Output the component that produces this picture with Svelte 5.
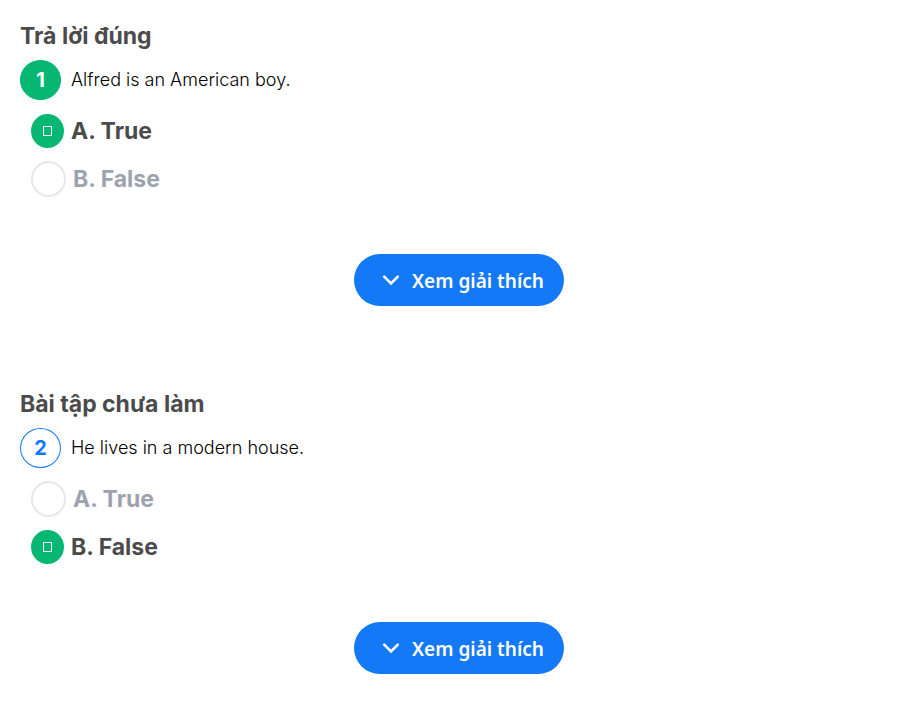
<script>
  let questions = $state([
    { number: 1, heading: 'Trả lời đúng', done: true, text: 'Alfred is an American boy.', answer: 'A' },
    { number: 2, heading: 'Bài tập chưa làm', done: false, text: 'He lives in a modern house.', answer: 'B' }
  ]);
  const options = [
    { key: 'A', label: 'A. True' },
    { key: 'B', label: 'B. False' }
  ];
</script>

<main>
  {#each questions as question (question.number)}
    <section>
      <h2>{question.heading}</h2>
      <div class="question">
        <span class="number" class:done={question.done}>{question.number}</span>
        <p id="question-{question.number}">{question.text}</p>
      </div>
      <div class="options" role="radiogroup" aria-labelledby="question-{question.number}">
        {#each options as option (option.key)}
          <label>
            <input type="radio" name="answer-{question.number}" value={option.key} bind:group={question.answer} />
            <span>{option.label}</span>
          </label>
        {/each}
      </div>
      <button type="button">
        <svg width="18" height="18" viewBox="0 0 18 18" fill="none" aria-hidden="true">
          <path d="M2.2 4.6 9 11.4 15.8 4.6" stroke="currentColor" stroke-width="2.6" stroke-linecap="round" />
        </svg>
        <span>Xem giải thích</span>
      </button>
    </section>
  {/each}
</main>

<style>
  :global(body) {
    margin: 0;
    background: #fff;
  }
  main {
    padding: 20px 9px 0 20px;
    font-family: Inter, 'Liberation Sans', sans-serif;
  }
  section {
    display: flex;
    flex-direction: column;
    padding-bottom: 82px;
  }
  section:last-child {
    padding-bottom: 40px;
  }
  h2 {
    margin: 0 0 8px;
    font-size: 23px;
    font-weight: 700;
    line-height: 32px;
    color: #4b4b4b;
  }
  .question {
    display: flex;
    align-items: center;
    gap: 10px;
  }
  .number {
    box-sizing: border-box;
    flex: none;
    width: 41px;
    height: 40px;
    border: 1px solid #1379f6;
    border-radius: 50%;
    font-size: 20px;
    font-weight: 700;
    line-height: 38px;
    text-align: center;
    color: #1379f6;
  }
  .number.done {
    border-color: #05b771;
    background: #05b771;
    color: #fff;
  }
  p {
    margin: 0;
    font-size: 18px;
    font-weight: 300;
    line-height: 24px;
    color: #000;
  }
  .options {
    display: flex;
    flex-direction: column;
    margin: 7px 0 51px 11px;
  }
  label {
    display: flex;
    align-items: center;
    gap: 7px;
    height: 48px;
    font-size: 23px;
    font-weight: 650;
    line-height: 32px;
    color: #9ca3af;
    cursor: pointer;
  }
  label:has(input:checked) {
    color: #4b4b4b;
  }
  input {
    appearance: none;
    box-sizing: border-box;
    display: grid;
    place-items: center;
    flex: none;
    width: 35px;
    height: 36px;
    margin: 0;
    border: 2px solid #e5e7eb;
    border-radius: 50%;
    background: #fff;
  }
  input:checked {
    width: 33px;
    height: 34px;
    border: 0;
    background: #05b771;
  }
  input:checked::before {
    content: '';
    box-sizing: border-box;
    width: 9px;
    height: 10px;
    border: 1px solid #fff;
  }
  button {
    display: flex;
    align-items: center;
    align-self: center;
    gap: 12px;
    height: 52px;
    padding: 2px 20px 0 28px;
    border: 0;
    border-radius: 26px;
    background: #1379f6;
    font-family: 'Noto Sans', 'Open Sans', sans-serif;
    font-size: 19px;
    font-weight: 600;
    line-height: 28px;
    color: #fff;
    cursor: pointer;
  }
</style>
